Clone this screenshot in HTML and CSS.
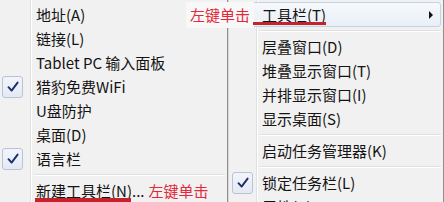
FILE: index.html
```html
<!DOCTYPE html>
<html lang="zh-CN">
<head>
<meta charset="utf-8">
<title>任务栏菜单</title>
<link rel="stylesheet" href="styles.css">
</head>
<body>
<div class="screen">
  <div class="menu menu-left">
    <div class="item"><span class="gutter"></span><span class="label">地址(A)</span></div>
    <div class="item"><span class="gutter"></span><span class="label">链接(L)</span></div>
    <div class="item"><span class="gutter"></span><span class="label">Tablet PC 输入面板</span></div>
    <div class="item"><span class="gutter"><span class="check"><svg viewBox="0 0 12 12" width="12" height="12"><path d="M1.5 6.2 L4.6 9.6 L10.6 1.6" fill="none" stroke="#1b2f6e" stroke-width="1.9" stroke-linecap="round" stroke-linejoin="round"/></svg></span></span><span class="label">猎豹免费WiFi</span></div>
    <div class="item"><span class="gutter"></span><span class="label">U盘防护</span></div>
    <div class="item"><span class="gutter"></span><span class="label">桌面(D)</span></div>
    <div class="item"><span class="gutter"><span class="check"><svg viewBox="0 0 12 12" width="12" height="12"><path d="M1.5 6.2 L4.6 9.6 L10.6 1.6" fill="none" stroke="#1b2f6e" stroke-width="1.9" stroke-linecap="round" stroke-linejoin="round"/></svg></span></span><span class="label">语言栏</span></div>
    <div class="sep"></div>
    <div class="item"><span class="gutter"></span><span class="label">新建工具栏(N)...</span><span class="note note-inline">左键单击</span></div>
  </div>
  <div class="menu menu-right">
    <div class="item item-hot"><span class="gutter"></span><span class="label">工具栏(T)</span><span class="arrow"></span></div>
    <div class="sep"></div>
    <div class="item"><span class="gutter"></span><span class="label">层叠窗口(D)</span></div>
    <div class="item"><span class="gutter"></span><span class="label">堆叠显示窗口(T)</span></div>
    <div class="item"><span class="gutter"></span><span class="label">并排显示窗口(I)</span></div>
    <div class="item"><span class="gutter"></span><span class="label">显示桌面(S)</span></div>
    <div class="sep"></div>
    <div class="item"><span class="gutter"></span><span class="label">启动任务管理器(K)</span></div>
    <div class="sep"></div>
    <div class="item"><span class="gutter"><span class="check"><svg viewBox="0 0 12 12" width="12" height="12"><path d="M1.5 6.2 L4.6 9.6 L10.6 1.6" fill="none" stroke="#1b2f6e" stroke-width="1.9" stroke-linecap="round" stroke-linejoin="round"/></svg></span></span><span class="label">锁定任务栏(L)</span></div>
    <div class="item"><span class="gutter"></span><span class="label">属性(R)</span></div>
  </div>
</div>
<div class="note note-top">左键单击</div>
<div class="mark mark-top"></div>
<div class="mark mark-bottom"></div>
</body>
</html>
```
FILE: styles.css
```css
html, body {
  margin: 0;
  padding: 0;
}
body {
  width: 444px;
  height: 202px;
  overflow: hidden;
  position: relative;
  background: #ffffff;
  font-family: "Noto Sans CJK SC", "Noto Sans", sans-serif;
  font-size: 15px;
  color: #141414;
}
.screen {
  display: flex;
  height: 202px;
}
.menu {
  box-sizing: border-box;
  height: 202px;
  overflow: hidden;
  display: flex;
  flex-direction: column;
}
.menu-left {
  width: 228px;
  padding-top: 3px;
  border-right: 1px solid #8f8f8f;
  background: linear-gradient(to right, #f1f1f1 0, #f1f1f1 30px, #dfe0e0 30px, #dfe0e0 31px, #ffffff 31px, #ffffff 32px, #f1f1f1 32px);
}
.menu-right {
  width: 216px;
  padding-top: 2px;
  border-right: 1px solid #8f8f8f;
  border-left: 1px solid #d8d8d8;
  margin-right: 0;
  background: linear-gradient(to right, #f1f1f1 0, #f1f1f1 27px, #dfe0e0 27px, #dfe0e0 28px, #ffffff 28px, #ffffff 29px, #f1f1f1 29px);
}
.item {
  flex: none;
  height: 24px;
  display: flex;
  align-items: center;
  box-sizing: border-box;
  white-space: nowrap;
}
.gutter {
  flex: none;
  display: flex;
  align-items: center;
  height: 24px;
}
.menu-left .gutter {
  width: 36px;
  padding-left: 2px;
  box-sizing: border-box;
}
.menu-right .gutter {
  width: 33px;
  padding-left: 3px;
  box-sizing: border-box;
}
.label {
  line-height: 20px;
}
.check {
  width: 21px;
  height: 22px;
  box-sizing: border-box;
  border: 1px solid #b9c3d6;
  border-radius: 3px;
  background: linear-gradient(#f2f5fb, #e3e9f4);
  display: flex;
  align-items: center;
  justify-content: center;
}
.sep {
  flex: none;
  height: 8px;
  position: relative;
}
.sep::after {
  content: "";
  position: absolute;
  top: 3px;
  right: 2px;
  height: 1px;
  background: #dfe0e0;
  border-bottom: 1px solid #ffffff;
}
.menu-left .sep::after {
  left: 34px;
}
.menu-right .sep::after {
  left: 30px;
}
.item-hot {
  height: 25px;
  margin: 0 2px 0 2px;
  border: 1px solid #c3d3e4;
  border-radius: 3px;
  background: linear-gradient(#f6f9fc, #e9eff6);
}
.item-hot .gutter {
  width: 30px;
  padding-left: 0;
}
.arrow {
  margin-left: auto;
  margin-right: 7px;
  width: 0;
  height: 0;
  border-top: 4px solid transparent;
  border-bottom: 4px solid transparent;
  border-left: 4px solid #111111;
}
.note {
  color: #e3283a;
  font-size: 15px;
  line-height: 20px;
  white-space: nowrap;
}
.note-inline {
  margin-left: 4px;
}
.note-top {
  position: absolute;
  left: 186px;
  top: 2px;
  padding: 3px 4px 3px 4px;
  background: #f8f8f8;
}
.mark {
  position: absolute;
  background: #c4222c;
}
.mark-top {
  left: 253px;
  top: 22px;
  width: 73px;
  height: 3px;
}
.mark-bottom {
  left: 35px;
  top: 198px;
  width: 96px;
  height: 4px;
}
```
